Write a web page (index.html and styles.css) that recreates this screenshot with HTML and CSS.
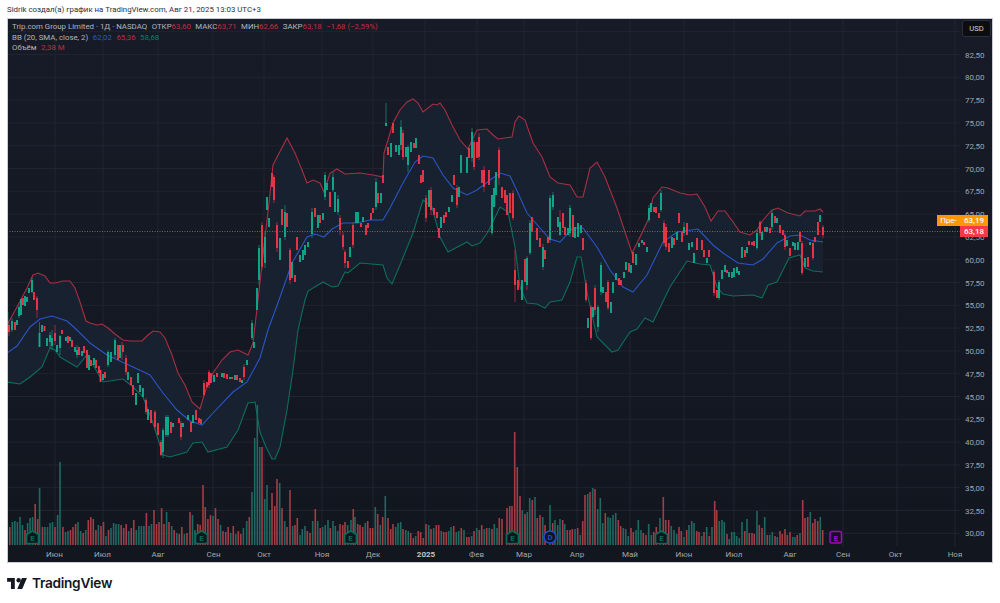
FILE: index.html
```html
<!DOCTYPE html>
<html lang="ru">
<head>
<meta charset="utf-8">
<title>Trip.com Group Limited - TradingView</title>
<link rel="stylesheet" href="styles.css">
</head>
<body>
<div class="page">
  <header class="caption">Sidrik создал(а) график на TradingView.com, Авг 21, 2025 13:03 UTC+3</header>
  <main class="frame">
    <svg class="chart" viewBox="8 19 984 543" preserveAspectRatio="none" role="img" aria-label="График">
      <defs>
        <clipPath id="above-lower">
          <path d="M7 382L20 384L30 377L42 367L50 348L55 350L60 357L77 367L87 355L103 382L123 379L132 386L143 397L153 423L163 455L170 457L187 452L193 443L202 442L208 452L227 447L238 430L248 403L255 402L260 432L266 447L272 459L275 459L280 447L287 410L293 370L298 330L305 300L308 291L323 282L332 287L338 286L345 272L348 273L360 263L383 265L387 278L392 284L400 265L413 233L423 200L432 207L440 237L448 252L467 242L472 246L480 243L488 232L500 207L508 212L515 247L520 287L527 303L537 304L545 308L550 302L562 300L570 282L577 257L581 257L588 297L597 337L612 352L618 350L630 332L637 329L645 318L653 322L670 287L687 261L700 264L710 265L717 287L723 294L733 296L753 295L762 298L768 285L777 282L789 258L800 255L805 268L813 271L823 272V0H7Z"/>
        </clipPath>
      </defs>

      <path class="grid" d="M7 31.7H960M7 54.5H960M7 77.3H960M7 100.1H960M7 122.9H960M7 145.7H960M7 168.5H960M7 191.3H960M7 214.1H960M7 236.9H960M7 259.7H960M7 282.5H960M7 305.3H960M7 328.1H960M7 350.9H960M7 373.7H960M7 396.5H960M7 419.3H960M7 442.1H960M7 464.9H960M7 487.7H960M7 510.5H960M7 533.3H960M55 18V546M103 18V546M158 18V546M213 18V546M264 18V546M322 18V546M373 18V546M425 18V546M477 18V546M524 18V546M577 18V546M630 18V546M684 18V546M734 18V546M790 18V546M843 18V546M897 18V546M955 18V546"/>

      <path class="band-fill" clip-path="url(#above-lower)" d="M7 325L17 307L27 288L33 275L38 273L45 276L50 283L55 283L63 281L70 281L75 288L80 302L86 321L90 323L97 325L102 324L108 328L115 334L123 340L130 341L142 341L148 335L153 331L160 332L165 338L172 355L178 373L185 385L192 402L200 409L205 392L213 373L222 360L230 352L238 350L248 355L253 343L258 300L265 237L269 203L273 165L287 138L295 153L302 170L307 183L313 180L320 183L324 192L330 173L337 169L345 174L360 173L373 175L383 177L384 153L388 140L393 123L400 110L407 102L413 99L418 103L423 112L433 104L437 105L440 103L445 110L452 125L460 140L468 149L477 130L487 129L493 135L498 139L512 137L515 122L519 116L525 120L533 143L542 157L550 177L558 183L570 185L577 197L583 197L590 168L597 162L605 177L617 208L625 232L632 253L640 237L648 220L653 198L662 187L668 188L680 193L690 195L697 194L705 207L711 221L718 211L725 211L733 222L740 232L750 235L757 230L763 220L772 210L778 208L788 213L800 216L805 211L815 211L820 209L823 212V600H7Z"/>

      <path class="vol-up" d="M7.3 545V523M12.4 545V522M14.9 545V521M17.4 545V522M20 545V517M22.5 545V525M27.6 545V523M30.1 545V518M32.6 545V517M39.6 545V488M44.9 545V527M47.5 545V527M50 545V523M52.5 545V522M57.6 545V515M60 545V462M65.5 545V532M68 545V531M78 545V522M80.7 545V531M85.7 545V530M98.4 545V525M106 545V536M111 545V528M113.6 545V523M116 545V524M118.6 545V524M128.7 545V531M136.3 545V530M138.9 545V526M141.4 545V526M143.9 545V526M149 545V526M151.5 545V524M166.6 545V512M171.7 545V526M176.8 545V533M184.4 545V534M192.5 545V515M195 545V530M213 545V516M220.6 545V525M230.7 545V533M235.8 545V534M243.4 545V528M246.7 545V521M252 545V492M254.7 545V438M257.3 545V405M259.7 545V447M264.7 545V499M267 545V485M269.7 545V510M279.7 545V483M284.7 545V521M292.7 545V526M300 545V535M302.3 545V529M305 545V526M312.7 545V521M317.7 545V521M322.7 545V527M325.3 545V525M328 545V520M333 545V521M335.3 545V526M337.7 545V531M347.7 545V525M351 545V520M355 545V517M365.3 545V523M375.3 545V507M380.3 545V525M385.3 545V496M395.7 545V527M398 545V523M400.7 545V522M405.7 545V530M408.3 545V531M415.7 545V536M428.7 545V525M433.7 545V528M441.3 545V531M448.7 545V531M451 545V527M456.3 545V532M458.7 545V531M464 545V530M471.7 545V536M476.7 545V528M484.3 545V529M489.3 545V528M494.3 545V524M497 545V528M522.3 545V510M527.3 545V512M529.7 545V498M535 545V497M542.7 545V517M550 545V505M555 545V520M557.7 545V525M560 545V519M564.7 545V524M575 545V529M580.3 545V535M587.7 545V494M592.7 545V488M597.7 545V509M600.3 545V498M602.7 545V523M608 545V517M610.3 545V518M613 545V515M615.7 545V513M623.3 545V528M625.7 545V529M628.3 545V536M636 545V530M638.3 545V520M641 545V530M648.7 545V524M651.3 545V535M660 545V518M671.3 545V526M674 545V530M676.7 545V534M684 545V537M689 545V525M691.7 545V521M694 545V523M701.7 545V536M706.7 545V527M712 545V527M719.3 545V521M722 545V520M724.3 545V522M729.3 545V539M731.7 545V532M734.3 545V532M736.7 545V536M739.3 545V538M742 545V522M747 545V519M757 545V511M764.7 545V517M769.7 545V535M772.3 545V532M777.3 545V537M792.7 545V537M795 545V537M800 545V533M810.3 545V512M820.3 545V517"/>

      <path class="vol-down" d="M9.8 545V527M25 545V530M35.2 545V504M37.7 545V519M42.5 545V527M55 545V527M62.9 545V527M70.5 545V530M73 545V527M75.6 545V524M83.2 545V533M88.3 545V520M90.8 545V517M93.3 545V519M95.9 545V530M101 545V526M103.5 545V522M108.5 545V530M121.2 545V525M123.7 545V528M126.2 545V524M131.3 545V528M133.8 545V520M146.4 545V513M154 545V510M156.5 545V524M159 545V522M161.6 545V508M164 545V524M169 545V522M174.2 545V530M179.3 545V534M181.8 545V527M187 545V533M190 545V512M197.7 545V524M200.2 545V525M203 545V485M205.3 545V507M207.9 545V519M210.5 545V515M215.5 545V508M218 545V519M223 545V531M225.7 545V532M228.2 545V527M233.3 545V526M238.3 545V531M240.8 545V534M249.3 545V517M262 545V447M272 545V493M274.7 545V506M277 545V479M282 545V508M287 545V527M290 545V490M295 545V525M297.3 545V518M307.3 545V531M310 545V533M315.3 545V509M320.3 545V528M330.3 545V528M340 545V524M342.7 545V525M345 545V522M353.3 545V509M357.7 545V524M360 545V525M362.7 545V527M367.7 545V521M370.3 545V528M372.7 545V528M377.7 545V514M382.7 545V517M388 545V518M390.7 545V529M393 545V524M403 545V529M410.7 545V533M413.3 545V538M418.3 545V531M420.7 545V532M423.3 545V538M426 545V524M431 545V529M436.3 545V525M438.7 545V525M443.7 545V532M446.3 545V532M453.7 545V526M461.3 545V528M466.7 545V537M469 545V537M474 545V531M479.3 545V530M481.7 545V525M486.7 545V528M492 545V529M499.3 545V518M502 545V519M507 545V508M509.7 545V506M512 545V506M514.7 545V432M517.3 545V467M520 545V496M525 545V514M532.3 545V500M537.3 545V518M540 545V515M545 545V525M552.7 545V523M562.7 545V520M567.3 545V530M570 545V530M572.3 545V529M577.7 545V528M582.7 545V521M585 545V495M590 545V492M595 545V489M605.3 545V513M618.3 545V520M620.7 545V526M631 545V528M633.3 545V532M643.3 545V533M646 545V535M653.7 545V532M656.3 545V527M663.3 545V497M665.7 545V520M668.7 545V520M679 545V527M681.3 545V531M686.7 545V530M696.7 545V531M699 545V532M704 545V532M709.3 545V536M714.7 545V501M716.7 545V510M727 545V534M744.7 545V531M749.3 545V533M752 545V533M754.3 545V534M759.3 545V525M762 545V528M767.3 545V535M775 545V536M780 545V531M782.3 545V534M785 545V529M787.3 545V535M790 545V532M797.3 545V535M802.7 545V500M805 545V518M807.7 545V517M812.7 545V523M815 545V519M817.7 545V521M822.7 545V530"/>

      <path class="line-red" d="M7 325L17 307L27 288L33 275L38 273L45 276L50 283L55 283L63 281L70 281L75 288L80 302L86 321L90 323L97 325L102 324L108 328L115 334L123 340L130 341L142 341L148 335L153 331L160 332L165 338L172 355L178 373L185 385L192 402L200 409L205 392L213 373L222 360L230 352L238 350L248 355L253 343L258 300L265 237L269 203L273 165L287 138L295 153L302 170L307 183L313 180L320 183L324 192L330 173L337 169L345 174L360 173L373 175L383 177L384 153L388 140L393 123L400 110L407 102L413 99L418 103L423 112L433 104L437 105L440 103L445 110L452 125L460 140L468 149L477 130L487 129L493 135L498 139L512 137L515 122L519 116L525 120L533 143L542 157L550 177L558 183L570 185L577 197L583 197L590 168L597 162L605 177L617 208L625 232L632 253L640 237L648 220L653 198L662 187L668 188L680 193L690 195L697 194L705 207L711 221L718 211L725 211L733 222L740 232L750 235L757 230L763 220L772 210L778 208L788 213L800 216L805 211L815 211L820 209L823 212"/>
      <path class="line-blue" d="M7 353L17 346L30 327L40 319L52 316L67 321L77 330L90 343L107 355L133 367L150 375L163 393L177 410L190 421L202 425L213 413L233 392L247 382L260 358L268 330L279 300L292 263L307 237L315 234L324 237L332 229L343 223L357 223L370 220L383 220L390 208L403 183L415 162L423 156L433 158L443 175L453 188L467 195L477 190L490 180L500 173L510 176L518 193L527 213L540 228L550 239L560 242L573 228L583 228L597 247L610 270L623 287L633 292L647 275L663 242L677 232L698 229L713 245L723 253L738 263L753 265L763 259L777 243L790 236L800 235L810 240L823 242"/>
      <path class="line-green" d="M7 382L20 384L30 377L42 367L50 348L55 350L60 357L77 367L87 355L103 382L123 379L132 386L143 397L153 423L163 455L170 457L187 452L193 443L202 442L208 452L227 447L238 430L248 403L255 402L260 432L266 447L272 459L275 459L280 447L287 410L293 370L298 330L305 300L308 291L323 282L332 287L338 286L345 272L348 273L360 263L383 265L387 278L392 284L400 265L413 233L423 200L432 207L440 237L448 252L467 242L472 246L480 243L488 232L500 207L508 212L515 247L520 287L527 303L537 304L545 308L550 302L562 300L570 282L577 257L581 257L588 297L597 337L612 352L618 350L630 332L637 329L645 318L653 322L670 287L687 261L700 264L710 265L717 287L723 294L733 296L753 295L762 298L768 285L777 282L789 258L800 255L805 268L813 271L823 272"/>

      <path class="wick-up" d="M12 318V332M19 305V318M32 277V293M39.5 322V347M50 332V348M52 330V350M60 335V355M77 345V358M108 350V367M115 338V358M136 393V405M163 428V458M166 415V437M168 415V437M252 320V340M259 245V285M265 232V268M285 205V240M312 208V238M325 172V200M333 172V192M338 195V215M376 178V210M386 103V126M401 120V150M408 145V172M472 128V162M492 195V235M495 180V206M530 220V255M550 195V243M553 192V210M570 205V237M595 285V315M598 305V332M601 262V295M649 205V222M661 190V212M684 222V236M719 280V300M757 230V250M772 210V230"/>
      <path class="wick-down" d="M9 322V336M37 296V318M55 325V345M122 342V360M126 355V375M146 398V414M155 410V430M161 440V456M181 421V440M204 380V396M209 370V388M244 364V380M262 222V270M274 175V203M277 222V252M290 248V284M340 215V235M343 232V250M345 250V268M353 222V248M376 190V206M403 130V160M426 195V222M431 187V215M457 185V208M474 140V170M479 133V160M484 166V192M499 147V185M513 190V220M515 250V302M527 256V290M543 244V270M560 210V236M586 280V302M591 305V340M608 280V310M664 220V246M666 224V250M714 270V296M760 220V236M785 233V250M802 241V275M813 241V260M823 225V238"/>
      <path class="body-up" d="M7.3 312V325M12 321V330M17 320V325M19 307V316M21 299V315M25 296V306M27 297V302M29 288V293M32 280V292M39.5 333V347M42 325V332M47 338V346M50 335V342M52 338V346M57 345V352M60 336V348M66 337V341M70 337V341M75 347V352M77 350V355M82 351V356M89 355V370M94 358V365M103 374V380M108 352V365M111 352V362M115 340V355M120 345V358M128 372V380M136 393V405M138 373V383M140 385V392M143 388V397M148 409V420M163 430V452M166 417V435M168 417V435M173 423V427M183 423V427M188 415V420M193 415V423M214 375V382M222 373V377M230 377V379M235 375V380M242 380V383M247 360V365M252 323V338M254 342V348M257 288V310M259 248V280M265 237V263M267 197V210M269 218V227M280 238V260M285 212V237M292 262V278M300 255V262M303 250V260M305 245V255M308 242V247M312 212V234M318 215V228M323 213V220M325 175V197M327 183V190M333 177V190M335 192V212M338 199V212M350 247V257M356 212V223M358 212V223M363 217V222M376 182V207M381 193V203M386 123V126M391 143V157M396 145V152M399 145V155M401 127V145M406 147V157M408 147V165M411 142V152M416 138V148M429 190V207M441 217V228M449 207V212M452 195V202M459 187V197M461 155V173M467 157V173M472 132V158M492 195V233M494 188V207M496 172V195M522 280V300M527 258V285M530 223V253M543 247V267M550 198V240M553 195V207M558 217V227M560 222V235M568 228V235M570 208V233M575 227V238M578 223V237M581 225V233M588 318V328M593 307V317M598 307V327M601 265V292M603 287V293M611 302V313M613 282V293M616 273V280M624 272V278M626 262V270M631 265V273M636 254V265M639 243V247M642 240V243M647 247V252M649 208V220M651 203V212M661 193V210M672 237V248M677 232V240M684 227V233M689 243V250M692 242V247M694 253V263M707 258V263M719 282V298M722 270V279M725 265V272M729 272V277M732 272V278M734 268V277M737 267V273M739 271V275M742 247V258M747 247V253M757 233V248M762 232V240M767 227V232M772 213V227M777 218V223M787 240V246M793 242V246M795 243V250M798 242V250M805 258V267M810 242V245M820 215V222"/>
      <path class="body-down" d="M9 325V332M15 322V330M23 298V305M34 292V300M37 298V310M44.5 326V331M55 333V341M62 330V334M68 336V343M72 340V347M79 347V355M84 346V353M87 350V368M91 360V366M96 360V368M99 366V373M100.500 370V382M105 372V378M118 345V360M123 345V352M126 358V372M131 377V385M133 385V395M146 400V412M151 410V423M155 412V427M158 423V435M161 442V455M171 422V433M179 418V423M181 423V437M191 422V432M196 410V420M199 418V423M201 419V424M204 383V395M207 382V387M209 372V385M211 373V383M217 373V377M224 373V378M227 374V379M232 377V379M237 375V380M240 378V382M244 367V377M262 225V267M272 173V187M274 177V200M277 225V248M282 209V225M287 213V227M290 250V280M295 275V282M297 237V250M315 208V217M320 215V223M330 192V207M340 218V230M343 235V247M345 252V263M348 261V268M353 225V245M361 223V227M366 225V235M368 223V228M371 213V220M373 208V213M378 193V203M383 175V183M388 147V155M393 123V133M403 133V157M414 143V148M419 155V164M421 175V183M423 170V182M426 198V218M431 190V210M434 208V215M437 212V218M439 228V238M444 215V223M446 212V217M454 175V185M457 188V205M469 148V158M474 142V167M477 142V158M479 137V157M482 170V183M484 170V187M489 170V185M499 150V178M502 187V198M505 190V203M507 195V215M510 193V213M513 193V218M515 270V285M518 280V290M525 259V282M532 217V232M537 228V240M540 238V247M545 250V259M548 237V243M563 213V228M565 227V235M573 215V237M583 238V250M586 283V300M591 307V338M595 288V310M606 292V302M608 282V308M619 278V285M621 280V285M629 263V272M633 252V263M644 242V245M654 207V212M656 207V213M659 213V218M664 223V243M666 227V247M669 243V252M674 238V245M679 213V223M682 232V242M687 223V235M697 238V250M702 240V250M704 250V257M709 250V257M714 272V293M717 290V298M727 270V273M745 250V257M749 241V245M752 242V245M754 241V246M760 222V233M765 227V232M770 228V233M775 216V223M780 225V233M783 230V235M785 235V247M790 248V256M800 232V242M802 243V273M808 257V267M813 243V258M815 237V242M818 222V235M823 227V235"/>

      <line class="last-price" x1="7" y1="231.5" x2="960" y2="231.5"/>

      <g class="marker-earn">
        <path d="M32.5 531l6 3.5V543.500H26.500V534.500Z"/><text x="32.5" y="540.500">E</text>
        <path d="M201.5 531l6 3.5V543.500H195.500V534.500Z"/><text x="201.5" y="540.500">E</text>
        <path d="M350.5 531l6 3.5V543.500H344.500V534.500Z"/><text x="350.5" y="540.500">E</text>
        <path d="M512.5 531l6 3.5V543.500H506.500V534.500Z"/><text x="512.5" y="540.500">E</text>
        <path d="M661.5 531l6 3.5V543.500H655.500V534.500Z"/><text x="661.5" y="540.500">E</text>
      </g>
      <g class="marker-div">
        <circle cx="550" cy="537" r="6"/><text x="550" y="540">D</text>
      </g>
      <g class="marker-next">
        <rect x="830" y="531.5" width="11.5" height="11.5" rx="1.5"/><text x="835.8" y="540.5">E</text>
      </g>

      <g class="price-labels">
        <text x="965" y="57.5">82,50</text><text x="965" y="80.3">80,00</text><text x="965" y="103.1">77,50</text><text x="965" y="125.9">75,00</text><text x="965" y="148.7">72,50</text><text x="965" y="171.5">70,00</text><text x="965" y="194.3">67,50</text><text x="965" y="217.1">65,00</text><text x="965" y="239.9">62,50</text><text x="965" y="262.7">60,00</text><text x="965" y="285.5">57,50</text><text x="965" y="308.3">55,00</text><text x="965" y="331.1">52,50</text><text x="965" y="353.9">50,00</text><text x="965" y="376.7">47,50</text><text x="965" y="399.5">45,00</text><text x="965" y="422.3">42,50</text><text x="965" y="445.1">40,00</text><text x="965" y="467.9">37,50</text><text x="965" y="490.7">35,00</text><text x="965" y="513.5">32,50</text><text x="965" y="536.3">30,00</text>
      </g>
      <g class="time-labels">
        <text x="54.5" y="557">Июн</text><text x="102.5" y="557">Июл</text><text x="158" y="557">Авг</text><text x="213.5" y="557">Сен</text><text x="264" y="557">Окт</text><text x="322" y="557">Ноя</text><text x="373" y="557">Дек</text><text class="year" x="426" y="557">2025</text><text x="476.5" y="557">Фев</text><text x="524" y="557">Мар</text><text x="577" y="557">Апр</text><text x="630" y="557">Май</text><text x="684" y="557">Июн</text><text x="734" y="557">Июл</text><text x="790" y="557">Авг</text><text x="843" y="557">Сен</text><text x="895.5" y="557">Окт</text><text x="955" y="557">Ноя</text>
      </g>
    </svg>

    <div class="legend">
      <div class="legend-row"><span>Trip.com Group Limited · 1Д · NASDAQ</span><span>ОТКР<b>63,60</b></span><span>МАКС<b>63,71</b></span><span>МИН<b>62,66</b></span><span>ЗАКР<b>63,18</b></span><b>−1,68 (−2,59%)</b></div>
      <div class="legend-row"><span>BB (20, SMA, close, 2)</span><i class="v-blue">62,02</i><i class="v-red">65,36</i><i class="v-green">58,68</i></div>
      <div class="legend-row"><span>Объём</span><i class="v-red">2,38 M</i></div>
    </div>

    <div class="currency">USD</div>
    <div class="tag tag-pre">Пре-</div>
    <div class="tag tag-pre-value">63,19</div>
    <div class="tag tag-last">63,18</div>
  </main>
  <footer class="brand">
    <svg class="brand-logo" viewBox="0 0 36 20" aria-hidden="true"><path d="M14 0H0v7h7v13h7Z"/><circle cx="21" cy="4" r="4"/><path d="M27 0h9l-8.500 20H18.500Z"/></svg>
    <span class="brand-name">TradingView</span>
  </footer>
</div>
</body>
</html>
```

FILE: styles.css
```css
html, body {
  margin: 0;
  background: #fff;
}

.page {
  display: flex;
  flex-direction: column;
  width: 1000px;
  height: 603px;
  overflow: hidden;
  font-family: Roboto, "Liberation Sans", sans-serif;
}

.caption {
  flex: 0 0 18px;
  height: 18px;
  padding-left: 7px;
  font-size: 7.85px;
  line-height: 19px;
  color: #2a2e39;
  white-space: nowrap;
  overflow: hidden;
}

.frame {
  position: relative;
  flex: 0 0 545px;
  margin: 0 7px;
  box-sizing: border-box;
  border: 1px solid #c9ccd3;
  background: linear-gradient(180deg, #171b27 0%, #12161f 100%);
}

.chart {
  display: block;
  width: 100%;
  height: 100%;
}

.grid { stroke: #1f2430; stroke-width: 1; fill: none; }
.band-fill { fill: #182130; stroke: none; }
.vol-up { stroke: #1e6a62; stroke-width: 1.6; fill: none; }
.vol-down { stroke: #a53c44; stroke-width: 1.6; fill: none; }
.line-red { stroke: #a82f42; stroke-width: 1.1; fill: none; }
.line-blue { stroke: #2a56c6; stroke-width: 1.1; fill: none; }
.line-green { stroke: #0d6e5d; stroke-width: 1.1; fill: none; }
.wick-up { stroke: #12886f; stroke-width: 0.8; fill: none; }
.wick-down { stroke: #b72f40; stroke-width: 0.8; fill: none; }
.body-up { stroke: #0fb08f; stroke-width: 1.8; fill: none; }
.body-down { stroke: #f7374a; stroke-width: 1.8; fill: none; }
.last-price { stroke: #7d6a45; stroke-width: 1; stroke-dasharray: 1 1.5; }

.marker-earn path { fill: #10141d; stroke: #0b6b59; stroke-width: 1.7; }
.marker-earn text,
.marker-div text,
.marker-next text {
  font-size: 8px;
  font-weight: 700;
  text-anchor: middle;
}
.marker-earn text { fill: #0b6b59; }
.marker-div circle { fill: #10141d; stroke: #1c4fd0; stroke-width: 1.5; }
.marker-div text { fill: #1c4fd0; }
.marker-next rect { fill: #10141d; stroke: #a800c8; stroke-width: 1.5; }
.marker-next text { fill: #a800c8; }

.price-labels text {
  font-size: 8px;
  fill: #a3a6af;
}
.time-labels text {
  font-size: 8px;
  fill: #a3a6af;
  text-anchor: middle;
}
.time-labels .year {
  font-weight: 700;
  fill: #c2c5cc;
}

.legend {
  position: absolute;
  top: 3px;
  left: 4px;
  font-size: 7.85px;
  line-height: 10.5px;
  color: #b2b5be;
  white-space: nowrap;
}
.legend-row {
  display: flex;
  gap: 4.5px;
}
.legend b,
.legend i {
  font-weight: 400;
  font-style: normal;
}
.legend b,
.v-red { color: #c02d3d; }
.v-blue { color: #2456d6; }
.v-green { color: #0c7f6b; }

.currency {
  position: absolute;
  top: 1px;
  right: 1px;
  width: 29px;
  height: 17px;
  box-sizing: border-box;
  border: 1px solid #2a2e39;
  border-radius: 3px;
  background: #0c0d11;
  color: #d1d4dc;
  font-size: 7.6px;
  line-height: 15px;
  text-align: center;
}

.tag {
  position: absolute;
  height: 11px;
  color: #fff;
  font-size: 8px;
  font-weight: 500;
  line-height: 11px;
  text-align: center;
}
.tag-pre {
  top: 196px;
  left: 929px;
  width: 23px;
  background: #ff9800;
  font-weight: 400;
}
.tag-pre-value {
  top: 196px;
  left: 952px;
  width: 28px;
  background: #ff9800;
}
.tag-last {
  top: 207px;
  left: 952px;
  width: 28px;
  background: #f7374a;
}

.brand {
  display: flex;
  flex: 1;
  align-items: center;
  gap: 5px;
  padding-left: 7px;
}
.brand-logo {
  width: 20px;
  height: 11px;
  fill: #131722;
}
.brand-name {
  font-family: Inter, "Liberation Sans", sans-serif;
  font-size: 13.7px;
  font-weight: 600;
  letter-spacing: -0.3px;
  color: #131722;
}
```
